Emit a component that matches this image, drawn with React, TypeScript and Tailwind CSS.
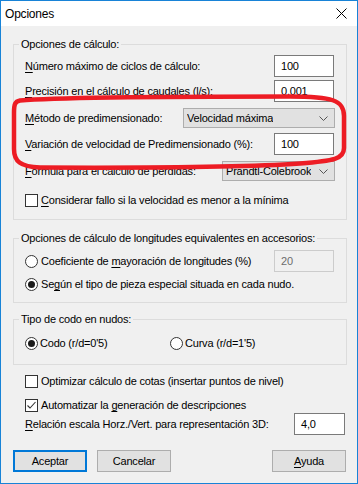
import React from "react";

const U = ({ children }: { children: React.ReactNode }) => (
  <span className="underline underline-offset-[2px] decoration-1">{children}</span>
);

const TextBox = ({ value, w = "w-[60px]", disabled = false }: { value: string; w?: string; disabled?: boolean }) => (
  <div
    className={
      disabled
        ? `${w} h-[22px] border border-[#cccccc] bg-[#f0f0f0] text-[#6d6d6d] flex items-center pl-[6px] shrink-0`
        : `${w} h-[22px] border border-[#7a7a7a] bg-white text-black flex items-center pl-[6px] shrink-0`
    }
  >
    {value}
  </div>
);

const Chevron = () => (
  <svg width="9" height="5" viewBox="0 0 9 5" className="shrink-0">
    <path d="M0.5 0.5 L4.5 4.5 L8.5 0.5" fill="none" stroke="#555555" strokeWidth="1" />
  </svg>
);

const Select = ({ value, w }: { value: string; w: string }) => (
  <div className={`${w} h-[20px] border border-[#adadad] bg-[#e1e1e1] flex items-center justify-between pl-[3px] pr-[6px] shrink-0`}>
    <span className="whitespace-nowrap overflow-hidden">{value}</span>
    <Chevron />
  </div>
);

const Check = ({ checked = false }: { checked?: boolean }) => (
  <div className="w-[13px] h-[13px] border border-[#333333] bg-white flex items-center justify-center shrink-0">
    {checked && (
      <svg width="11" height="11" viewBox="0 0 11 11">
        <path d="M1.5 5.5 L4 8 L9.5 2" fill="none" stroke="#333333" strokeWidth="1.1" />
      </svg>
    )}
  </div>
);

const Radio = ({ checked = false }: { checked?: boolean }) => (
  <div className="w-[13px] h-[13px] rounded-full border border-[#333333] bg-white flex items-center justify-center shrink-0">
    {checked && <div className="w-[7px] h-[7px] rounded-full bg-[#1a1a1a]" />}
  </div>
);

export default function App() {
  return (
    <div className="relative w-[358px] h-[484px] border border-[#1883d7] bg-[#f0f0f0] flex flex-col text-[11px] leading-[16px] tracking-[-0.2px] whitespace-nowrap text-black font-['Liberation_Sans',Arial,sans-serif] overflow-hidden">
      {/* Title bar */}
      <div className="h-[25px] bg-white flex items-center justify-between pl-[4px] pr-[10px] shrink-0">
        <span className="text-[12px] tracking-[-0.2px]">Opciones</span>
        <svg width="11" height="11" viewBox="0 0 11 11">
          <path d="M0.5 0.5 L10.5 10.5 M10.5 0.5 L0.5 10.5" stroke="#000" strokeWidth="1" />
        </svg>
      </div>

      {/* Group 1 */}
      <fieldset className="ml-[12px] mr-[10px] mt-[10px] border border-[#dcdcdc] pl-[11px] pr-[12px] pt-0 pb-[11px] flex flex-col">
        <legend className="ml-[-6px] px-[2px] leading-[16px]">Opciones de cálculo:</legend>
        <div className="mt-[3px] h-[22px] flex items-center justify-between">
          <span><U>N</U>úmero máximo de ciclos de cálculo:</span>
          <TextBox value="100" />
        </div>
        <div className="mt-[3px] h-[22px] flex items-center justify-between">
          <span><U>P</U>recisión en el cálculo de caudales (l/s):</span>
          <TextBox value="0,001" />
        </div>
        <div className="mt-[6px] h-[20px] flex items-center justify-between mr-[-1px]">
          <span><U>M</U>étodo de predimensionado:</span>
          <Select value="Velocidad máxima" w="w-[152px]" />
        </div>
        <div className="mt-[5px] h-[22px] flex items-center justify-between">
          <span><U>V</U>ariación de velocidad de Predimensionado (%):</span>
          <TextBox value="100" />
        </div>
        <div className="mt-[6px] h-[20px] flex items-center justify-between mr-[-1px]">
          <span><U>F</U>órmula para el cálculo de pérdidas:</span>
          <Select value="Prandtl-Colebrook" w="w-[113px]" />
        </div>
        <div className="mt-[11px] h-[16px] flex items-center gap-[3px]">
          <Check />
          <span><U>C</U>onsiderar fallo si la velocidad es menor a la mínima</span>
        </div>
      </fieldset>

      {/* Group 2 */}
      <fieldset className="ml-[12px] mr-[10px] mt-[10px] border border-[#dcdcdc] pl-[11px] pr-[12px] pt-0 pb-[10px] flex flex-col">
        <legend className="ml-[-6px] px-[2px] leading-[16px]">Opciones de cálculo de longitudes equivalentes en accesorios:</legend>
        <div className="mt-[4px] h-[22px] flex items-center justify-between">
          <div className="flex items-center gap-[3px]">
            <Radio />
            <span>Coeficiente de <U>m</U>ayoración de longitudes (%)</span>
          </div>
          <TextBox value="20" disabled />
        </div>
        <div className="mt-[4px] h-[16px] flex items-center gap-[3px]">
          <Radio checked />
          <span>Se<U>g</U>ún el tipo de pieza especial situada en cada nudo.</span>
        </div>
      </fieldset>

      {/* Group 3 */}
      <fieldset className="ml-[12px] mr-[10px] mt-[8px] border border-[#dcdcdc] pl-[11px] pr-[12px] pt-0 pb-[13px] flex flex-col">
        <legend className="ml-[-6px] px-[2px] leading-[16px]">Tipo de codo en nudos:</legend>
        <div className="mt-[8px] h-[16px] flex items-center">
          <div className="w-[145px] flex items-center gap-[2px]">
            <Radio checked />
            <span>Codo (r/d=0'5)</span>
          </div>
          <div className="flex items-center gap-[2px]">
            <Radio />
            <span>Curva (r/d=1'5)</span>
          </div>
        </div>
      </fieldset>

      {/* Bottom options */}
      <div className="pl-[24px] pr-[12px] flex flex-col">
        <div className="mt-[8px] h-[16px] flex items-center gap-[3px]">
          <Check />
          <span>Optimizar cálculo de cotas (insertar puntos de nivel)</span>
        </div>
        <div className="mt-[8px] h-[16px] flex items-center gap-[3px]">
          <Check checked />
          <span>Automatizar la <U>g</U>eneración de descripciones</span>
        </div>
        <div className="h-[22px] flex items-center justify-between">
          <span><U>R</U>elación escala Horz./Vert. para representación 3D:</span>
          <TextBox value="4,0" w="w-[51px]" />
        </div>
      </div>

      {/* Buttons */}
      <div className="mt-[15px] pl-[12px] pr-[11px] flex items-center">
        <div className="w-[74px] h-[22px] border-2 border-[#0078d7] bg-[#e1e1e1] flex items-center justify-center">Aceptar</div>
        <div className="ml-[10px] w-[74px] h-[22px] border border-[#adadad] bg-[#e1e1e1] flex items-center justify-center">Cancelar</div>
        <div className="ml-auto w-[74px] h-[22px] border border-[#adadad] bg-[#e1e1e1] flex items-center justify-center"><span><U>A</U>yuda</span></div>
      </div>

      {/* Red annotation */}
      <svg className="absolute left-[-1px] top-[-1px] pointer-events-none" width="358" height="484" viewBox="0 0 358 484">
        <path
          d="M20 100.5 C 60 97, 150 96.5, 290 96.5 C 332 96.5, 344 100, 344 116 L 344 148 C 344 159, 334 161, 300 163.5 C 250 167, 150 168, 40 167.5 C 20 167, 14 161, 14 149 L 14 113 C 14 104, 15 101.5, 20 100.5 Z"
          fill="none"
          stroke="#ed1c24"
          strokeWidth="4.5"
        />
      </svg>
    </div>
  );
}
